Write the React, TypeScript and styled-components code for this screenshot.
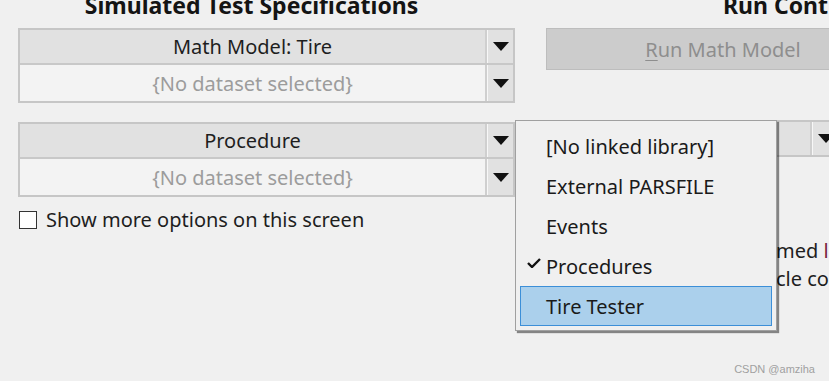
import styled, { createGlobalStyle } from "styled-components";

const Global = createGlobalStyle`
  html, body {
    margin: 0;
    padding: 0;
    background: #f0f0f0;
    overflow: hidden;
  }
  body {
    font-family: "Noto Sans", "Liberation Sans", sans-serif;
    color: #1e1e1e;
  }
`;

const Page = styled.div`
  position: relative;
  box-sizing: border-box;
  width: 829px;
  height: 381px;
  overflow: hidden;
  display: flex;
  gap: 31px;
  padding-left: 18px;
`;

const Column = styled.div<{ $w: number }>`
  flex: 0 0 ${({ $w }) => $w}px;
  display: flex;
  flex-direction: column;
`;

const Title = styled.h2<{ $shift?: number }>`
  margin: -12px 0 5px;
  height: 35px;
  line-height: 35px;
  font-size: 23px;
  font-weight: 700;
  text-align: center;
  color: #141414;
  white-space: nowrap;
  padding-right: ${({ $shift }) => $shift ?? 0}px;
`;

const Combo = styled.div<{ $mb?: number }>`
  border: 2px solid #c6c6c6;
  display: flex;
  flex-direction: column;
  margin-bottom: ${({ $mb }) => $mb ?? 0}px;
`;

const ComboRow = styled.div<{ $head?: boolean }>`
  display: grid;
  grid-template-columns: 1fr 26px;
  height: ${({ $head }) => ($head ? 33 : 36)}px;
  & + & {
    border-top: 2px solid #c8c8c8;
  }
`;

const ComboText = styled.div<{ $head?: boolean }>`
  display: flex;
  align-items: center;
  justify-content: center;
  font-size: 20px;
  background: ${({ $head }) => ($head ? "#e1e1e1" : "#f3f3f3")};
  color: ${({ $head }) => ($head ? "#1e1e1e" : "#9c9c9c")};
  border-right: 2px solid #cfcfcf;
`;

const ArrowCell = styled.div`
  display: flex;
  align-items: center;
  justify-content: center;
  background: #e1e1e1;
  border-left: 1px solid #f7f7f7;
`;

const Arrow = () => (
  <svg width="16" height="9" viewBox="0 0 16 9">
    <path d="M0 0 H16 L8 9 Z" fill="#111" />
  </svg>
);

const CheckRow = styled.label`
  display: flex;
  align-items: center;
  gap: 9px;
  margin-top: 9px;
  font-size: 20px;
  color: #1e1e1e;
`;

const CheckBox = styled.span`
  width: 16px;
  height: 16px;
  border: 1px solid #333;
  background: #fff;
  margin-left: 1px;
`;

const RunButton = styled.div`
  width: 354px;
  height: 42px;
  box-sizing: border-box;
  border: 1px solid #bdbdbd;
  background: #cccccc;
  color: #8e8e8e;
  font-size: 20px;
  display: flex;
  align-items: center;
  justify-content: center;
  margin-bottom: 50px;
  u {
    text-decoration-thickness: 1px;
    text-underline-offset: 3px;
  }
`;

const Note = styled.div`
  margin-top: 80px;
  padding-left: 230px;
  font-size: 20px;
  line-height: 28px;
  white-space: nowrap;
  color: #1e1e1e;
  span {
    color: #7a1f3d;
  }
`;

const Menu = styled.div`
  position: absolute;
  left: 515px;
  top: 120px;
  width: 262px;
  box-sizing: border-box;
  padding: 5px 4px 4px;
  background: #f0f0f0;
  border: 1px solid #a0a0a0;
  box-shadow: 2px 2px 1px rgba(0, 0, 0, 0.45);
  display: flex;
  flex-direction: column;
`;

const MenuItem = styled.div<{ $hot?: boolean }>`
  position: relative;
  height: 40px;
  box-sizing: border-box;
  display: flex;
  align-items: center;
  padding-left: 25px;
  font-size: 20px;
  color: #1a1a1a;
  background: ${({ $hot }) => ($hot ? "#abd0ec" : "transparent")};
  border: 1px solid ${({ $hot }) => ($hot ? "#3c8fd8" : "transparent")};
`;

const Tick = styled.svg`
  position: absolute;
  left: 6px;
  top: 11px;
`;

const Watermark = styled.div`
  position: absolute;
  right: 14px;
  bottom: 6px;
  font-family: "Liberation Sans", sans-serif;
  font-size: 11px;
  color: #a0a0a0;
`;

const menuItems = ["[No linked library]", "External PARSFILE", "Events", "Procedures", "Tire Tester"];

export default function App() {
  return (
    <>
      <Global />
      <Page>
        <Column $w={497}>
          <Title $shift={30}>Simulated Test Specifications</Title>
          <Combo $mb={19}>
            <ComboRow $head>
              <ComboText $head>Math Model: Tire</ComboText>
              <ArrowCell><Arrow /></ArrowCell>
            </ComboRow>
            <ComboRow>
              <ComboText>{"{No dataset selected}"}</ComboText>
              <ArrowCell><Arrow /></ArrowCell>
            </ComboRow>
          </Combo>
          <Combo>
            <ComboRow $head>
              <ComboText $head>Procedure</ComboText>
              <ArrowCell><Arrow /></ArrowCell>
            </ComboRow>
            <ComboRow>
              <ComboText>{"{No dataset selected}"}</ComboText>
              <ArrowCell><Arrow /></ArrowCell>
            </ComboRow>
          </Combo>
          <CheckRow>
            <CheckBox />
            Show more options on this screen
          </CheckRow>
        </Column>
        <Column $w={490}>
          <Title>Run Control</Title>
          <RunButton>
            <span><u>R</u>un Math Model</span>
          </RunButton>
          <Combo style={{ width: 290 }}>
            <ComboRow $head>
              <ComboText $head>Vehicle</ComboText>
              <ArrowCell><Arrow /></ArrowCell>
            </ComboRow>
          </Combo>
          <Note>
            <div>med <span>link</span></div>
            <div>cle code</div>
          </Note>
        </Column>
        <Menu>
          {menuItems.map((m, i) => (
            <MenuItem key={m} $hot={i === 4}>
              {m === "Procedures" && (
                <Tick width="14" height="10" viewBox="0 0 14 10">
                  <path d="M1 5 L5 9 L13 1" stroke="#111" strokeWidth="2.4" fill="none" />
                </Tick>
              )}
              {m}
            </MenuItem>
          ))}
        </Menu>
        <Watermark>CSDN @amziha</Watermark>
      </Page>
    </>
  );
}
